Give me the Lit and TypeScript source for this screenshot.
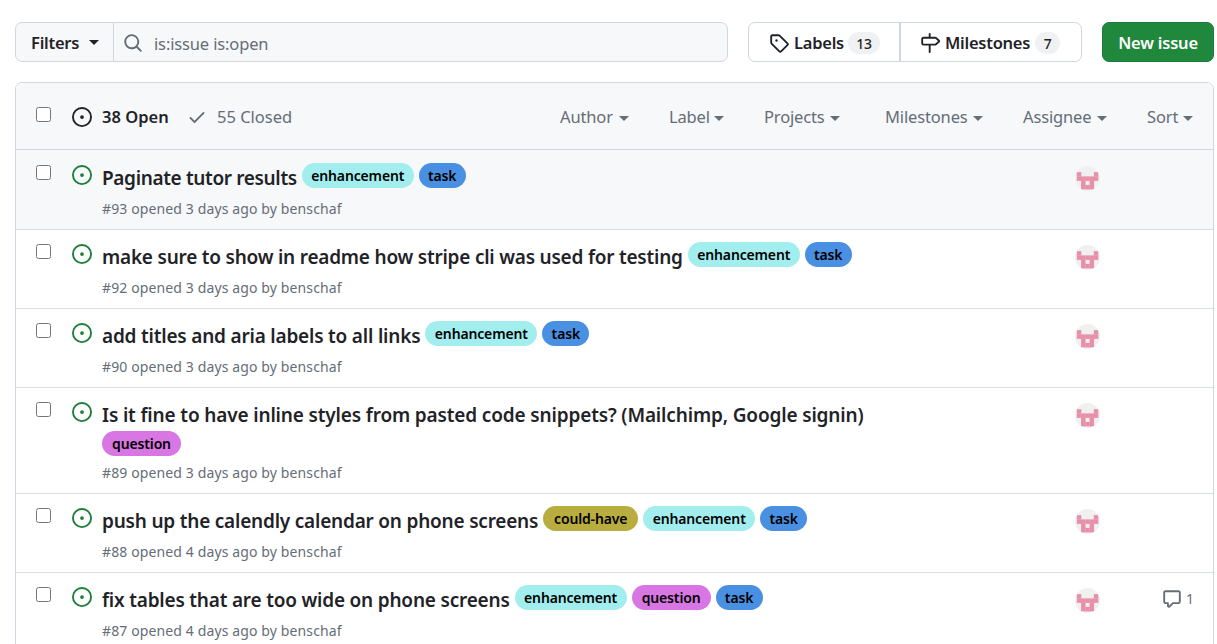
import { LitElement, html, css, svg } from "lit";
import { customElement, property } from "lit/decorators.js";
import { classMap } from "lit/directives/class-map.js";
import { styleMap } from "lit/directives/style-map.js";

const paths: Record<string, string> = {
  opened: "M8 9.5a1.5 1.5 0 1 0 0-3 1.5 1.5 0 0 0 0 3Z M8 0a8 8 0 1 1 0 16A8 8 0 0 1 8 0ZM1.5 8a6.5 6.5 0 1 0 13 0 6.5 6.5 0 0 0-13 0Z",
  check: "M13.78 4.22a.75.75 0 0 1 0 1.06l-7.25 7.25a.75.75 0 0 1-1.06 0L2.22 9.28a.751.751 0 0 1 .018-1.042.751.751 0 0 1 1.042-.018L6 10.94l6.72-6.72a.75.75 0 0 1 1.06 0Z",
  search: "M10.68 11.74a6 6 0 0 1-7.922-8.982 6 6 0 0 1 8.982 7.922l3.04 3.04a.749.749 0 0 1-.326 1.275.749.749 0 0 1-.734-.215ZM11.5 7a4.499 4.499 0 1 0-8.997 0A4.499 4.499 0 0 0 11.5 7Z",
  tag: "M1 7.775V2.75C1 1.784 1.784 1 2.75 1h5.025c.464 0 .91.184 1.238.513l6.25 6.25a1.75 1.75 0 0 1 0 2.474l-5.026 5.026a1.75 1.75 0 0 1-2.474 0l-6.25-6.25A1.752 1.752 0 0 1 1 7.775Zm1.5 0c0 .066.026.13.073.177l6.25 6.25a.25.25 0 0 0 .354 0l5.025-5.025a.25.25 0 0 0 0-.354l-6.25-6.25a.25.25 0 0 0-.177-.073H2.75a.25.25 0 0 0-.25.25ZM6 5a1 1 0 1 1 0 2 1 1 0 0 1 0-2Z",
  milestone: "M7.75 0a.75.75 0 0 1 .75.75V3h3.634c.414 0 .814.147 1.13.414l2.07 1.75a1.75 1.75 0 0 1 0 2.672l-2.07 1.75a1.75 1.75 0 0 1-1.13.414H8.5v5.25a.75.75 0 0 1-1.5 0V10H2.75A1.75 1.75 0 0 1 1 8.25v-3.5C1 3.784 1.784 3 2.75 3H7V.75A.75.75 0 0 1 7.75 0Zm4.384 8.5a.25.25 0 0 0 .161-.06l2.07-1.75a.248.248 0 0 0 0-.38l-2.07-1.75a.25.25 0 0 0-.161-.06H2.75a.25.25 0 0 0-.25.25v3.5c0 .138.112.25.25.25h9.384Z",
  comment: "M1 2.75C1 1.784 1.784 1 2.75 1h10.5c.966 0 1.75.784 1.75 1.75v7.5A1.75 1.75 0 0 1 13.25 12H9.06l-2.573 2.573A1.458 1.458 0 0 1 4 13.543V12H2.75A1.75 1.75 0 0 1 1 10.25Zm1.75-.25a.25.25 0 0 0-.25.25v7.5c0 .138.112.25.25.25h2a.75.75 0 0 1 .75.75v2.19l2.72-2.72a.749.749 0 0 1 .53-.22h4.5a.25.25 0 0 0 .25-.25v-7.5a.25.25 0 0 0-.25-.25Z",
};

const icon = (name: string) =>
  html`<svg class="icon" viewBox="0 0 16 16" aria-hidden="true"><path d=${paths[name]}></path></svg>`;

const caret = html`<svg class="caret" viewBox="0 0 10 5" aria-hidden="true"><path d="M0 0h10L5 5z"></path></svg>`;

interface Issue {
  id: number;
  title: string;
  tracking: number;
  days: number;
  labels: string[];
  comments?: number;
  hovered?: boolean;
}

const issues: Issue[] = [
  { id: 93, title: "Paginate tutor results", tracking: -0.35, days: 3, labels: ["enhancement", "task"], hovered: true },
  { id: 92, title: "make sure to show in readme how stripe cli was used for testing", tracking: -0.22, days: 3, labels: ["enhancement", "task"] },
  { id: 90, title: "add titles and aria labels to all links", tracking: -0.2, days: 3, labels: ["enhancement", "task"] },
  { id: 89, title: "Is it fine to have inline styles from pasted code snippets? (Mailchimp, Google signin)", tracking: -0.15, days: 3, labels: ["question"] },
  { id: 88, title: "push up the calendly calendar on phone screens", tracking: -0.21, days: 4, labels: ["could-have", "enhancement", "task"] },
  { id: 87, title: "fix tables that are too wide on phone screens", tracking: -0.2, days: 4, labels: ["enhancement", "question", "task"], comments: 1 },
];

@customElement("user-avatar")
export class UserAvatar extends LitElement {
  static styles = css`
    :host { display: block; width: 25px; height: 25px; border-radius: 50%; overflow: hidden; background: #f0f0f0; }
    svg { display: block; width: 25px; height: 25px; fill: #e890aa; }
  `;
  render() {
    const cells = [[0, 1], [4, 1], [0, 2], [1, 2], [2, 2], [3, 2], [4, 2], [1, 3], [3, 3], [1, 4], [2, 4], [3, 4]];
    return html`<svg viewBox="0 0 25 25">
      ${cells.map(([x, y]) => svg`<rect x=${1.8 + x * 4.25} y=${1.9 + y * 4.25} width="4.5" height="4.5"></rect>`)}
    </svg>`;
  }
}

@customElement("issue-row")
export class IssueRow extends LitElement {
  @property({ attribute: false }) issue!: Issue;

  static styles = css`
    :host { display: block; }
    .row { display: flex; align-items: flex-start; min-height: 78px; box-sizing: border-box; padding: 0 19px 8px 20px; border-bottom: 1px solid #d8dee4; }
    .hovered { background: #f6f8fa; padding-top: 1px; }
    .check { width: 15px; height: 15px; margin: 14px 21px 0 0; flex: none; }
    .icon { width: 20px; height: 20px; flex: none; fill: #1a7f37; }
    .state { margin: 14px 10px 0 0; }
    .main { width: 830px; padding-top: 12px; }
    .line { display: flex; flex-wrap: wrap; align-items: flex-start; column-gap: 5px; }
    .title { font-size: 19px; font-weight: 600; line-height: 31px; color: #1f2328; white-space: nowrap; }
    .label { box-sizing: border-box; height: 25px; margin-bottom: 2px; border-radius: 13px; font-size: 14px; font-weight: 600; line-height: 25px; text-align: center; color: #000; letter-spacing: -0.15px; white-space: nowrap; }
    .enhancement { width: 112px; background: #a2eeef; }
    .task { width: 47px; background: #4a90e2; }
    .question { width: 79px; background: #d876e3; }
    .could-have { width: 95px; background: #b9ad3f; }
    .meta { margin-top: 3px; font-size: 14px; line-height: 24px; color: #656d76; letter-spacing: 0.12px; white-space: nowrap; }
    .assignee { margin: 15px 0 0 143px; }
    .comments { display: flex; align-items: center; gap: 4px; margin: 14px 0 0 auto; font-size: 14px; line-height: 24px; color: #656d76; }
    .comments .icon { fill: #656d76; }
  `;

  render() {
    const i = this.issue;
    return html`<div class=${classMap({ row: true, hovered: !!i.hovered })}>
      <input class="check" type="checkbox" aria-label="Select issue" />
      <svg class="icon state" viewBox="0 0 16 16"><path d=${paths.opened}></path></svg>
      <div class="main">
        <div class="line">
          <span class="title" style=${styleMap({ letterSpacing: `${i.tracking}px` })}>${i.title}</span>
          ${i.labels.map((l) => html`<span class="label ${l}">${l}</span>`)}
        </div>
        <div class="meta">#${i.id} opened ${i.days} days ago by benschaf</div>
      </div>
      <user-avatar class="assignee"></user-avatar>
      ${i.comments ? html`<div class="comments">${icon("comment")}<span>${i.comments}</span></div>` : ""}
    </div>`;
  }
}

@customElement("app-root")
export class AppRoot extends LitElement {
  static styles = css`
    :host { display: block; box-sizing: border-box; height: 644px; overflow: hidden; padding: 22px 3px 0 15px; background: #fff; color: #1f2328; font-family: "Segoe UI", "Noto Sans", sans-serif; font-size: 16.5px; }
    .icon { width: 20px; height: 20px; flex: none; fill: currentColor; }
    .caret { width: 10px; height: 5px; flex: none; fill: currentColor; }
    .toolbar { display: flex; height: 40px; margin-bottom: 20px; }
    .search { display: flex; box-sizing: border-box; width: 713px; border: 1px solid #d0d7de; border-radius: 7px; background: #f6f8fa; }
    .filters { display: flex; align-items: center; gap: 10px; box-sizing: border-box; width: 98px; padding-left: 15px; border-right: 1px solid #d0d7de; font-weight: 600; letter-spacing: -0.25px; }
    .filters .caret { margin-top: 1px; }
    .query { display: flex; align-items: center; gap: 11px; padding-left: 9px; color: #656d76; letter-spacing: -0.14px; }
    .query span { padding-top: 2px; }
    .query .icon { margin-top: 2px; }
    .nav { display: flex; box-sizing: border-box; width: 334px; margin-left: 20px; border: 1px solid #d0d7de; border-radius: 7px; font-weight: 600; letter-spacing: -0.25px; }
    .tab { display: flex; align-items: center; box-sizing: border-box; padding-left: 19px; gap: 5px; }
    .labels { width: 152px; padding-left: 20px; border-right: 2px solid #d0d7de; }
    .labels .count { margin-left: -1px; }
    .tab .icon { margin-top: 2px; }
    .count { height: 22px; margin-top: 1px; border-radius: 11px; background: #eff1f3; font-size: 14px; line-height: 23px; font-weight: 500; text-align: center; }
    .wide { width: 32px; }
    .narrow { width: 25px; }
    .create { width: 112px; box-sizing: border-box; margin-left: 20px; border: 1px solid #1c7c39; border-radius: 7px; background: #1f883d; color: #fff; font-weight: 600; line-height: 39px; text-align: center; letter-spacing: -0.2px; }
    .box { border: 1px solid #d0d7de; border-radius: 7px 7px 0 0; overflow: hidden; }
    .head { display: flex; align-items: center; height: 66px; padding: 0 20px; background: #f6f8fa; border-bottom: 1px solid #d0d7de; color: #656d76; letter-spacing: -0.1px; }
    .head .icon { margin-top: 2px; }
    .check { width: 15px; height: 15px; margin: 0 21px 4px 0; }
    .open { display: flex; align-items: center; gap: 10px; width: 115px; font-weight: 600; color: #1f2328; letter-spacing: 0; }
    .closed { display: flex; align-items: center; gap: 10px; letter-spacing: 0; }
    .menus { display: flex; gap: 40px; margin-left: auto; }
    .menu { display: flex; align-items: center; justify-content: space-between; letter-spacing: -0.15px; }
    .menu .caret { margin-top: 4px; }
    .author { width: 69px; }
    .label { width: 55px; }
    .projects { width: 76px; }
    .milestones { width: 98px; margin-left: 5px; }
    .assignee { width: 84px; }
    .sort { width: 46px; }
  `;

  render() {
    return html`
      <div class="toolbar">
        <div class="search">
          <div class="filters"><span>Filters</span>${caret}</div>
          <div class="query">${icon("search")}<span>is:issue is:open</span></div>
        </div>
        <div class="nav">
          <div class="tab labels">${icon("tag")}<span>Labels</span><span class="count wide">13</span></div>
          <div class="tab">${icon("milestone")}<span>Milestones</span><span class="count narrow">7</span></div>
        </div>
        <div class="create">New issue</div>
      </div>
      <div class="box">
        <div class="head">
          <input class="check" type="checkbox" aria-label="Select all issues" />
          <div class="open">${icon("opened")}<span>38 Open</span></div>
          <div class="closed">${icon("check")}<span>55 Closed</span></div>
          <div class="menus">
            ${["Author", "Label", "Projects", "Milestones", "Assignee", "Sort"].map(
              (m) => html`<div class="menu ${m.toLowerCase()}"><span>${m}</span>${caret}</div>`
            )}
          </div>
        </div>
        ${issues.map((i) => html`<issue-row .issue=${i}></issue-row>`)}
      </div>
    `;
  }
}
